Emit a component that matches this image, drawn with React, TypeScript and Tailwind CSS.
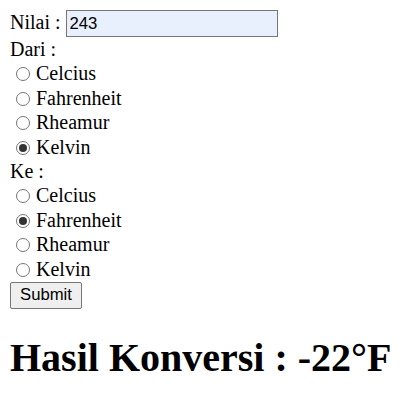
import React from "react";

const units = ["Celcius", "Fahrenheit", "Rheamur", "Kelvin"];

function Radio({ checked, label }: { checked: boolean; label: string }) {
  return (
    <div className="flex h-[24.75px] items-center">
      <span className="ml-[6px] mr-[6px] mt-[1px] flex h-[14px] w-[14px] items-center justify-center rounded-full border border-[#767676] bg-white">
        {checked && <span className="h-[8px] w-[8px] rounded-full bg-[#333]" />}
      </span>
      <span>{label}</span>
    </div>
  );
}

export default function App() {
  const [nilai, setNilai] = React.useState("243");
  const dari = "Kelvin";
  const ke = "Fahrenheit";

  return (
    <div className="p-[10px] font-['Liberation_Serif',serif] text-[20px] leading-[23px] text-black">
      <div className="flex h-[28px] items-start">
        <span className="mt-[1px]">Nilai :&nbsp;</span>
        <input
          className="h-[27px] w-[212px] border border-[#767676] bg-[#e8f0fe] px-[3px] font-['Liberation_Sans',Arial,sans-serif] text-[16.7px] outline-none"
          value={nilai}
          onChange={(e) => setNilai(e.target.value)}
        />
      </div>
      <div className="h-[23px]">Dari :</div>
      {units.map((u) => (
        <Radio key={"d" + u} checked={u === dari} label={u} />
      ))}
      <div className="h-[23px]">Ke :</div>
      {units.map((u) => (
        <Radio key={"k" + u} checked={u === ke} label={u} />
      ))}
      <button className="h-[27px] w-[72px] rounded-[2px] border border-[#767676] bg-[#efefef] font-['Liberation_Sans',Arial,sans-serif] text-[16.7px] leading-none">
        Submit
      </button>
      <h1 className="mt-[26px] text-[40px] font-bold leading-[46px]">Hasil Konversi : -22°F</h1>
    </div>
  );
}
